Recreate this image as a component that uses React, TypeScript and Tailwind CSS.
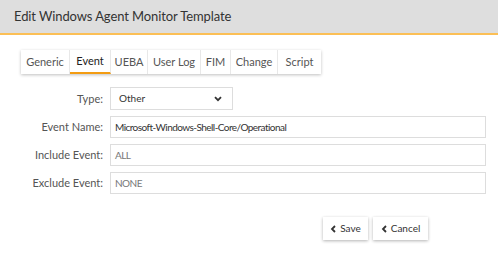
import React from "react";

const tabs: [string, string][] = [
  ["Generic", "w-[49px]"],
  ["Event", "w-[41px]"],
  ["UEBA", "w-[37px]"],
  ["User Log", "w-[53px]"],
  ["FIM", "w-[30px]"],
  ["Change", "w-[47px]"],
  ["Script", "w-[43px]"],
];

function Chevron() {
  return (
    <svg width="7" height="8" viewBox="0 0 7 8" className="mr-[3px]">
      <path d="M5 1 L2 4 L5 7" fill="none" stroke="#333" strokeWidth="1.8" />
    </svg>
  );
}

export default function App() {
  const font = { fontFamily: "Lato, 'Noto Sans', sans-serif" };
  return (
    <div className="w-[498px] h-[254px] bg-white text-[#333]" style={font}>
      <div className="h-[35px] bg-[#dedede] border-b-2 border-[#fbbf56] flex items-center pl-[14px] text-[13px] tracking-[-0.1px] text-[#333]">
        Edit Windows Agent Monitor Template
      </div>
      <div className="pl-[21px] pt-[13px]">
        <div className="inline-flex bg-white shadow-[0_1px_3px_rgba(0,0,0,0.25)] h-[24px] text-[11px]">
          {tabs.map(([t, w]) => (
            <div
              key={t}
              className={
                w +
                " flex items-center justify-center border-r border-[#e8e8e8] last:border-r-0 " +
                (t === "Event" ? "border-b-2 border-b-[#f39c12] text-[#222]" : "text-[#555]")
              }
            >
              {t}
            </div>
          ))}
        </div>
      </div>
      <div className="mt-[13px] flex flex-col gap-[6px] text-[11px]">
        <div className="flex items-center">
          <div className="w-[103px] text-right text-[#555]">Type:</div>
          <div className="ml-[7px] w-[123px] h-[23px] border border-[#ddd] flex items-center justify-between pl-[8px] pr-[10px] text-[10px]">
            <span>Other</span>
            <svg width="8" height="6" viewBox="0 0 8 6">
              <path d="M1 1.2 L4 4.2 L7 1.2" fill="none" stroke="#333" strokeWidth="1.8" />
            </svg>
          </div>
        </div>
        {[
          ["Event Name:", "Microsoft-Windows-Shell-Core/Operational", "text-[#333]"],
          ["Include Event:", "ALL", "text-[#777]"],
          ["Exclude Event:", "NONE", "text-[#777]"],
        ].map(([l, v, c]) => (
          <div key={l} className="flex items-center">
            <div className="w-[103px] text-right text-[#555]">{l}</div>
            <div className={"ml-[7px] w-[376px] h-[22px] border border-[#ddd] flex items-center px-[4px] text-[10px] tracking-[-0.55px] " + c}>{v}</div>
          </div>
        ))}
      </div>
      <div className="flex justify-end gap-[5px] pr-[70px] mt-[23px] text-[10px]">
        <div className="h-[23px] w-[45px] flex items-center justify-center bg-white shadow-[0_1px_3px_rgba(0,0,0,0.3)]">
          <Chevron />Save
        </div>
        <div className="h-[23px] w-[55px] flex items-center justify-center bg-white shadow-[0_1px_3px_rgba(0,0,0,0.3)]">
          <Chevron />Cancel
        </div>
      </div>
    </div>
  );
}
